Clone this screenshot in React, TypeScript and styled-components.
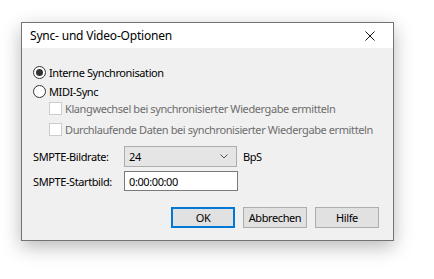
import styled, { createGlobalStyle } from 'styled-components'

const GlobalStyle = createGlobalStyle`
    html, body {
        margin: 0;
        padding: 0;
        background: #ffffff;
        font-family: "Noto Sans", "Liberation Sans", sans-serif;
        font-size: 11px;
        color: #000;
    }
`

const SDesktop = styled.div`
    width: 434px;
    height: 279px;
    padding: 22px 0 0 21px;
    box-sizing: border-box;
`

const SWindow = styled.div`
    width: 373px;
    height: 219px;
    box-sizing: border-box;
    border: 1px solid #737373;
    background: #f0f0f0;
    display: flex;
    flex-direction: column;
    box-shadow: 0 6px 18px rgba(0, 0, 0, 0.28);
`

const STitleBar = styled.div`
    height: 25px;
    background: #ffffff;
    display: flex;
    align-items: center;
    justify-content: space-between;
    padding-left: 8px;
`

const STitle = styled.span`
    font-size: 12px;
    letter-spacing: -0.2px;
`

const SClose = styled.div`
    width: 46px;
    height: 25px;
    display: flex;
    align-items: center;
    justify-content: center;
`

const SBody = styled.div`
    flex: 1;
    display: flex;
    flex-direction: column;
    padding: 15px 14px 0 11px;
    letter-spacing: -0.4px;
`

const SOptionRow = styled.label<{ $indent?: number; $disabled?: boolean; $h?: number }>`
    display: flex;
    align-items: center;
    height: ${p => p.$h ?? 19}px;
    padding-left: ${p => p.$indent ?? 0}px;
    color: ${p => (p.$disabled ? '#6d6d6d' : '#000')};
    white-space: nowrap;
`

const SRadio = styled.span<{ $checked?: boolean }>`
    width: 13px;
    height: 13px;
    box-sizing: border-box;
    border-radius: 50%;
    border: 1px solid #333;
    background: #fff;
    margin-right: 3px;
    display: flex;
    align-items: center;
    justify-content: center;
    &::after {
        content: '';
        width: 7px;
        height: 7px;
        border-radius: 50%;
        background: ${p => (p.$checked ? '#333' : 'transparent')};
    }
`

const SCheckbox = styled.span`
    width: 13px;
    height: 13px;
    box-sizing: border-box;
    border: 1px solid #cccccc;
    background: #fff;
    margin-right: 3px;
`

const SCheckGroup = styled.div`
    display: flex;
    flex-direction: column;
    margin-top: -3px;
`

const SFieldRow = styled.div<{ $gap: number }>`
    display: flex;
    align-items: center;
    margin-top: ${p => p.$gap}px;
`

const SLabel = styled.span`
    width: 91px;
`

const SSelect = styled.div`
    width: 113px;
    height: 21px;
    box-sizing: border-box;
    border: 1px solid #adadad;
    background: #e5e5e5;
    display: flex;
    align-items: center;
    justify-content: space-between;
    padding: 0 8px 0 4px;
`

const SUnit = styled.span`
    margin-left: 6px;
`

const SInput = styled.div`
    width: 114px;
    height: 20px;
    box-sizing: border-box;
    border: 1px solid #7a7a7a;
    background: #fff;
    display: flex;
    align-items: center;
    padding-left: 4px;
`

const SButtons = styled.div`
    display: flex;
    justify-content: flex-end;
    gap: 8px;
    margin-top: 16px;
`

const SButton = styled.button<{ $default?: boolean }>`
    width: 64px;
    height: 21px;
    box-sizing: border-box;
    padding: 0;
    background: #e1e1e1;
    border: ${p => (p.$default ? '2px solid #0078d7' : '1px solid #adadad')};
    font-family: inherit;
    font-size: 11px;
    letter-spacing: -0.4px;
    color: #000;
`

const App = () => {
    return (
        <SDesktop>
            <GlobalStyle />
            <SWindow>
                <STitleBar>
                    <STitle>Sync- und Video-Optionen</STitle>
                    <SClose>
                        <svg width="10" height="10" viewBox="0 0 10 10">
                            <path d="M0.5 0.5 L9.5 9.5 M9.5 0.5 L0.5 9.5" stroke="#111" strokeWidth="1" />
                        </svg>
                    </SClose>
                </STitleBar>

                <SBody>
                    <SOptionRow>
                        <SRadio $checked />
                        Interne Synchronisation
                    </SOptionRow>
                    <SOptionRow>
                        <SRadio />
                        MIDI-Sync
                    </SOptionRow>

                    <SCheckGroup>
                        <SOptionRow $indent={16} $disabled $h={21}>
                            <SCheckbox />
                            Klangwechsel bei synchronisierter Wiedergabe ermitteln
                        </SOptionRow>
                        <SOptionRow $indent={16} $disabled $h={21}>
                            <SCheckbox />
                            Durchlaufende Daten bei synchronisierter Wiedergabe ermitteln
                        </SOptionRow>
                    </SCheckGroup>

                    <SFieldRow $gap={6}>
                        <SLabel>SMPTE-Bildrate:</SLabel>
                        <SSelect>
                            <span>24</span>
                            <svg width="8" height="5" viewBox="0 0 8 5">
                                <path d="M0.5 0.5 L4 4 L7.5 0.5" stroke="#555" fill="none" strokeWidth="1" />
                            </svg>
                        </SSelect>
                        <SUnit>BpS</SUnit>
                    </SFieldRow>
                    <SFieldRow $gap={4}>
                        <SLabel>SMPTE-Startbild:</SLabel>
                        <SInput>0:00:00:00</SInput>
                    </SFieldRow>

                    <SButtons>
                        <SButton $default>OK</SButton>
                        <SButton>Abbrechen</SButton>
                        <SButton>Hilfe</SButton>
                    </SButtons>
                </SBody>
            </SWindow>
        </SDesktop>
    )
}

export default App
